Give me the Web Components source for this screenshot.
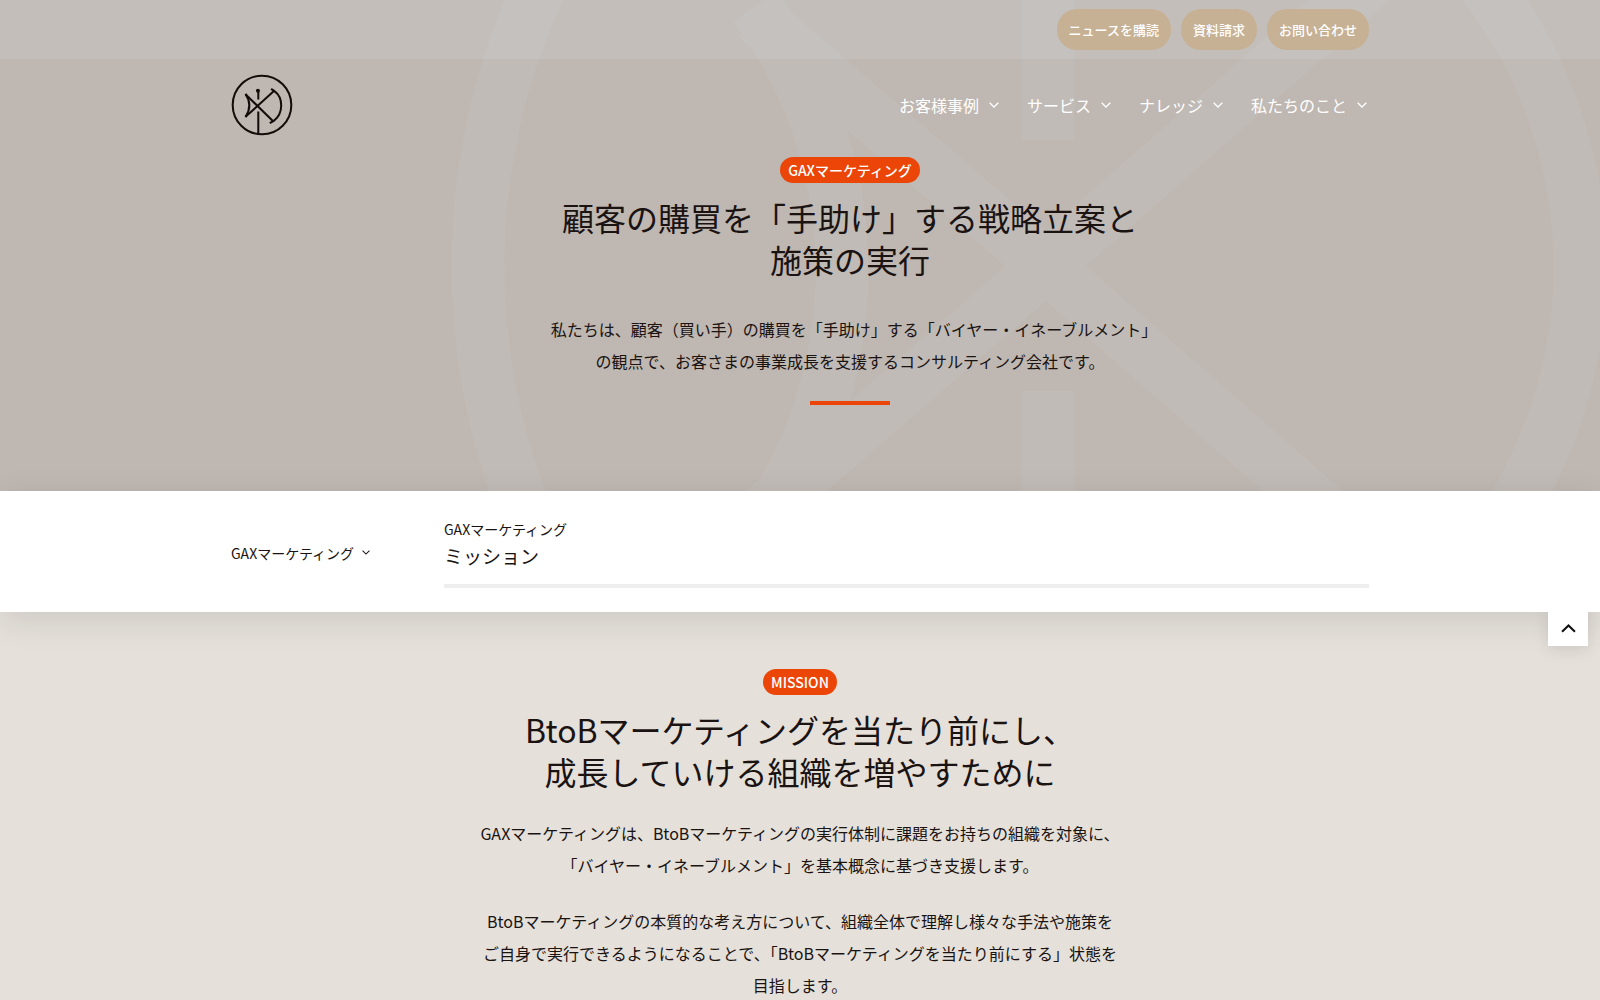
<!DOCTYPE html>
<html lang="ja">
<head>
<meta charset="utf-8">
<meta name="viewport" content="width=device-width, initial-scale=1">
<title>GAXマーケティング</title>
<style>
  html { scrollbar-width: none; }
  body {
    margin: 0;
    background: #e5e0da;
    color: #1a1311;
    font-family: "Noto Sans CJK JP", sans-serif;
    font-size: 16px;
    line-height: 32px;
  }
</style>
</head>
<body>
<gax-page></gax-page>
<script>
const define = (name, html, setup) => {
  const template = document.createElement('template');
  template.innerHTML = html;
  customElements.define(name, class extends HTMLElement {
    constructor() {
      super();
      this.attachShadow({ mode: 'open' }).append(template.content.cloneNode(true));
    }
    connectedCallback() { if (setup) setup(this, this.shadowRoot); }
  });
};

define('gax-chevron', `
  <style>
    :host { display: inline-flex; }
    svg { display: block; width: var(--chevron-size, 10px); fill: none; stroke: currentColor; stroke-width: var(--chevron-stroke, 1.3); }
    :host([up]) svg { transform: rotate(180deg); }
  </style>
  <svg viewBox="0 0 10 6" aria-hidden="true"><path d="M.7 .8 5 5 9.300 .8"/></svg>`);

define('gax-pill', `
  <style>
    :host { display: block; }
    a {
      display: block; padding: 0 12px; border-radius: 20px; background: #c6b195;
      color: #fff; font-size: 13px; font-weight: 500; line-height: 41px;
      text-decoration: none; white-space: nowrap;
    }
  </style>
  <a href="#"><slot></slot></a>`);

define('gax-menu-item', `
  <style>
    :host { display: block; }
    a {
      display: flex; align-items: center; gap: 10px; color: #fff; font-size: 16px;
      line-height: 32px; text-decoration: none; white-space: nowrap;
    }
  </style>
  <a href="#"><slot></slot><gax-chevron></gax-chevron></a>`);

define('gax-badge', `
  <style>
    :host {
      display: inline-block; padding: 0 8px; border-radius: 13px; background: #eb4508;
      color: #fff; font-size: 14px; font-weight: 500; line-height: 26px;
    }
  </style>
  <slot></slot>`);

define('gax-logo', `
  <style>
    :host { display: block; }
    a { display: block; color: #140c0a; }
    svg { display: block; width: 62px; height: 62px; fill: none; stroke: currentColor; stroke-width: 6; }
  </style>
  <a href="#" aria-label="ホーム">
    <svg viewBox="91 71 184 184" aria-hidden="true">
      <circle cx="183" cy="163" r="87"/>
      <path d="M172 250V182M172 147V124"/>
      <circle cx="171" cy="121" r="4" fill="currentColor" stroke-width="4"/>
      <path d="M134 198 220 120M134 131 216 211"/>
      <path d="M134 130Q157 164 134 199"/>
      <path d="M210 115 220 122C246 141 248 187 218 210L206 217"/>
    </svg>
  </a>`);

define('gax-emblem', `
  <style>
    :host { display: block; overflow: hidden; }
    svg { display: block; width: 100%; height: 100%; fill: none; stroke: #c0bbb7; stroke-width: 53; }
  </style>
  <svg viewBox="0 0 1600 491" preserveAspectRatio="xMidYMid slice" aria-hidden="true">
    <circle cx="1141" cy="266" r="663"/>
    <circle cx="1116" cy="267" r="464" pathLength="360" stroke-dasharray="100 260" stroke-dashoffset="50"/>
    <path d="M755 6A444 444 0 0 1 755 534"/>
    <path d="M756 17 1046 266 1420 594M1420 -62 1046 266 700 566"/>
    <path d="M1048 0V140M1048 391V491"/>
  </svg>`);

define('gax-topbar', `
  <style>
    :host { display: block; background: rgba(210,210,208,.3); }
    div { display: flex; justify-content: flex-end; gap: 10px; max-width: 1138px; margin: 0 auto; padding: 9px 0; }
  </style>
  <div>
    <gax-pill>ニュースを購読</gax-pill>
    <gax-pill>資料請求</gax-pill>
    <gax-pill>お問い合わせ</gax-pill>
  </div>`);

define('gax-header', `
  <style>
    :host { display: block; }
    .row { display: flex; align-items: center; justify-content: space-between; max-width: 1138px; margin: 0 auto; padding: 15px 0; }
    nav { display: flex; gap: 28px; padding-right: 2px; }
  </style>
  <gax-topbar></gax-topbar>
  <div class="row">
    <gax-logo></gax-logo>
    <nav>
      <gax-menu-item>お客様事例</gax-menu-item>
      <gax-menu-item>サービス</gax-menu-item>
      <gax-menu-item>ナレッジ</gax-menu-item>
      <gax-menu-item>私たちのこと</gax-menu-item>
    </nav>
  </div>`);

define('gax-hero', `
  <style>
    :host { display: block; position: relative; background: #bfb7b1; }
    gax-emblem { position: absolute; inset: 0; }
    .body { position: relative; }
    section {
      display: flex; flex-direction: column; align-items: center;
      max-width: 600px; margin: 0 auto; padding: 6px 0 86px 100px; text-align: center;
    }
    h1 { margin: 13px 0 33px; font-size: 32px; font-weight: 400; line-height: 42px; }
    p { margin: 0 0 24px; }
    hr { width: 80px; height: 4px; margin: 0; border: 0; background: #eb4508; }
  </style>
  <gax-emblem></gax-emblem>
  <div class="body">
    <gax-header></gax-header>
    <section>
      <gax-badge>GAXマーケティング</gax-badge>
      <h1>顧客の購買を「手助け」する戦略立案と<br>施策の実行</h1>
      <p>私たちは、顧客（買い手）の購買を「手助け」する「バイヤー・イネーブルメント」の観点で、お客さまの事業成長を支援するコンサルティング会社です。</p>
      <hr>
    </section>
  </div>`);

define('gax-local-nav', `
  <style>
    :host { display: block; position: relative; z-index: 1; background: #fff; box-shadow: 0 8px 32px rgba(0,0,0,.11); }
    .row { display: flex; align-items: center; max-width: 1138px; margin: 0 auto; padding: 26px 0 24px; }
    .menu {
      display: flex; align-items: center; gap: 8px; padding: 0; border: 0; background: none;
      color: inherit; font: inherit; font-size: 14px; line-height: 24px; --chevron-size: 8px;
    }
    .menu-col { flex: 0 0 213px; }
    .place { flex: 1; font-size: 14px; line-height: 24px; }
    .place strong { display: block; font-size: 19px; font-weight: 400; line-height: 30px; }
    .track { height: 4px; margin-top: 13px; background: #eee; }
    .top {
      position: absolute; right: 12px; top: 115px; display: flex; align-items: center; justify-content: center;
      width: 40px; height: 40px; padding: 4px 0 0; border: 0; background: #fff; color: #111;
      clip-path: inset(6px -24px -24px -24px); box-shadow: 0 4px 16px rgba(0,0,0,.1);
      --chevron-size: 15px; --chevron-stroke: 1.400;
    }
  </style>
  <div class="row">
    <div class="menu-col"><button class="menu" type="button">GAXマーケティング<gax-chevron></gax-chevron></button></div>
    <div class="place">
      GAXマーケティング
      <strong>ミッション</strong>
      <div class="track"></div>
    </div>
  </div>
  <button class="top" type="button" aria-label="ページの先頭へ"><gax-chevron up></gax-chevron></button>`);

define('gax-mission', `
  <style>
    :host { display: block; }
    section {
      display: flex; flex-direction: column; align-items: center;
      max-width: 640px; margin: 0 auto; padding: 57px 0 64px; text-align: center;
    }
    h2 { margin: 13px 0 25px; font-size: 32px; font-weight: 400; line-height: 42px; }
    p { margin: 0 0 24px; }
  </style>
  <section>
    <gax-badge>MISSION</gax-badge>
    <h2>BtoBマーケティングを当たり前にし、<br>成長していける組織を増やすために</h2>
    <p>GAXマーケティングは、BtoBマーケティングの実行体制に課題をお持ちの組織を対象に、「バイヤー・イネーブルメント」を基本概念に基づき支援します。</p>
    <p>BtoBマーケティングの本質的な考え方について、組織全体で理解し様々な手法や施策をご自身で実行できるようになることで、「BtoBマーケティングを当たり前にする」状態を目指します。</p>
  </section>`);

define('gax-page', `
  <style>:host { display: block; }</style>
  <gax-hero></gax-hero>
  <main>
    <gax-local-nav></gax-local-nav>
    <gax-mission></gax-mission>
  </main>`);
</script>
</body>
</html>
